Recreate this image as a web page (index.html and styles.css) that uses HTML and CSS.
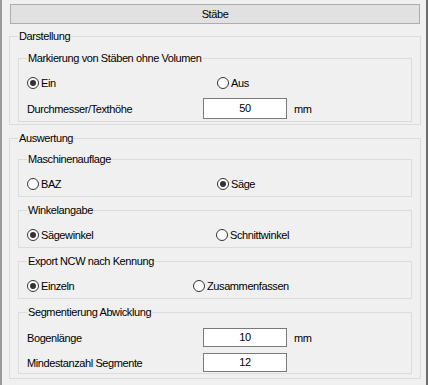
FILE: index.html
```html
<!DOCTYPE html>
<html lang="de">
<head>
    <meta charset="UTF-8">
    <title>Stäbe</title>
    <link rel="stylesheet" href="styles.css">
</head>
<body>
    <div class="window">
        <div class="title-bar">Stäbe</div>

        <fieldset class="group">
            <legend>Darstellung</legend>
            <fieldset class="group sub">
                <legend>Markierung von Stäben ohne Volumen</legend>
                <div class="radio-row cols-190">
                    <label class="radio"><span class="dot checked"></span>Ein</label>
                    <label class="radio"><span class="dot"></span>Aus</label>
                </div>
                <div class="field-row first">
                    <span class="field-label">Durchmesser/Texthöhe</span>
                    <span class="field-input">50</span>
                    <span class="unit">mm</span>
                </div>
            </fieldset>
        </fieldset>

        <fieldset class="group second">
            <legend>Auswertung</legend>
            <fieldset class="group sub">
                <legend>Maschinenauflage</legend>
                <div class="radio-row cols-190">
                    <label class="radio"><span class="dot"></span>BAZ</label>
                    <label class="radio"><span class="dot checked"></span>Säge</label>
                </div>
            </fieldset>
            <fieldset class="group sub">
                <legend>Winkelangabe</legend>
                <div class="radio-row cols-189">
                    <label class="radio"><span class="dot checked"></span>Sägewinkel</label>
                    <label class="radio"><span class="dot"></span>Schnittwinkel</label>
                </div>
            </fieldset>
            <fieldset class="group sub">
                <legend>Export NCW nach Kennung</legend>
                <div class="radio-row cols-166">
                    <label class="radio"><span class="dot checked"></span>Einzeln</label>
                    <label class="radio"><span class="dot"></span>Zusammenfassen</label>
                </div>
            </fieldset>
            <fieldset class="group sub">
                <legend>Segmentierung Abwicklung</legend>
                <div class="field-row top">
                    <span class="field-label">Bogenlänge</span>
                    <span class="field-input small">10</span>
                    <span class="unit">mm</span>
                </div>
                <div class="field-row">
                    <span class="field-label">Mindestanzahl Segmente</span>
                    <span class="field-input small">12</span>
                </div>
            </fieldset>
        </fieldset>
    </div>
</body>
</html>
```

FILE: styles.css
```css
html, body {
    margin: 0;
    background: #f0f0f0;
}
.window {
    box-sizing: border-box;
    height: 385px;
    padding: 4px 5px 0 7px;
    border-left: 2px solid #9a9a9a;
    border-right: 2px solid #6d6d6d;
    font-family: "Liberation Sans", Arial, sans-serif;
    font-size: 11px;
    letter-spacing: -0.4px;
    color: #000;
}
.title-bar {
    margin: 0 1px;
    height: 18px;
    line-height: 18px;
    text-align: center;
    background: #e1e1e1;
    border: 1px solid #adadad;
}
.group {
    margin: 6px 0 0;
    padding: 1px 8px 2px;
    min-width: 0;
    border: 1px solid #dcdcdc;
}
.group legend {
    padding: 0 1px;
    margin-left: 0;
    line-height: 13px;
}
.group.second {
    margin-top: 7px;
    padding-bottom: 4px;
}
.sub {
    margin-top: 8px;
    padding-bottom: 1px;
}
.group.second .sub:first-of-type {
    margin-top: 7px;
}
.second .sub + .sub {
    margin-top: 7px;
}
.radio-row {
    display: grid;
    height: 22px;
    margin-top: 6px;
    align-items: center;
}
.cols-190 { grid-template-columns: 190px 1fr; }
.cols-189 { grid-template-columns: 189px 1fr; }
.cols-166 { grid-template-columns: 166px 1fr; }
.radio {
    display: flex;
    align-items: center;
    gap: 2px;
}
.dot {
    box-sizing: border-box;
    width: 12px;
    height: 12px;
    border: 1px solid #333;
    border-radius: 50%;
    background: #fff;
    display: flex;
    align-items: center;
    justify-content: center;
}
.dot.checked::after {
    content: "";
    width: 6px;
    height: 6px;
    border-radius: 50%;
    background: #333;
}
.field-row {
    display: flex;
    align-items: center;
    margin-top: 6px;
}
.field-row.first {
    margin-top: 4px;
    margin-bottom: 1px;
}
.field-row.top {
    margin-top: 8px;
}
.field-label {
    width: 176px;
}
.field-input {
    box-sizing: border-box;
    width: 84px;
    height: 21px;
    line-height: 19px;
    text-align: center;
    background: #fff;
    border: 1px solid #7a7a7a;
}
.field-input.small {
    height: 19px;
    line-height: 17px;
}
.unit {
    margin-left: 7px;
}
```
